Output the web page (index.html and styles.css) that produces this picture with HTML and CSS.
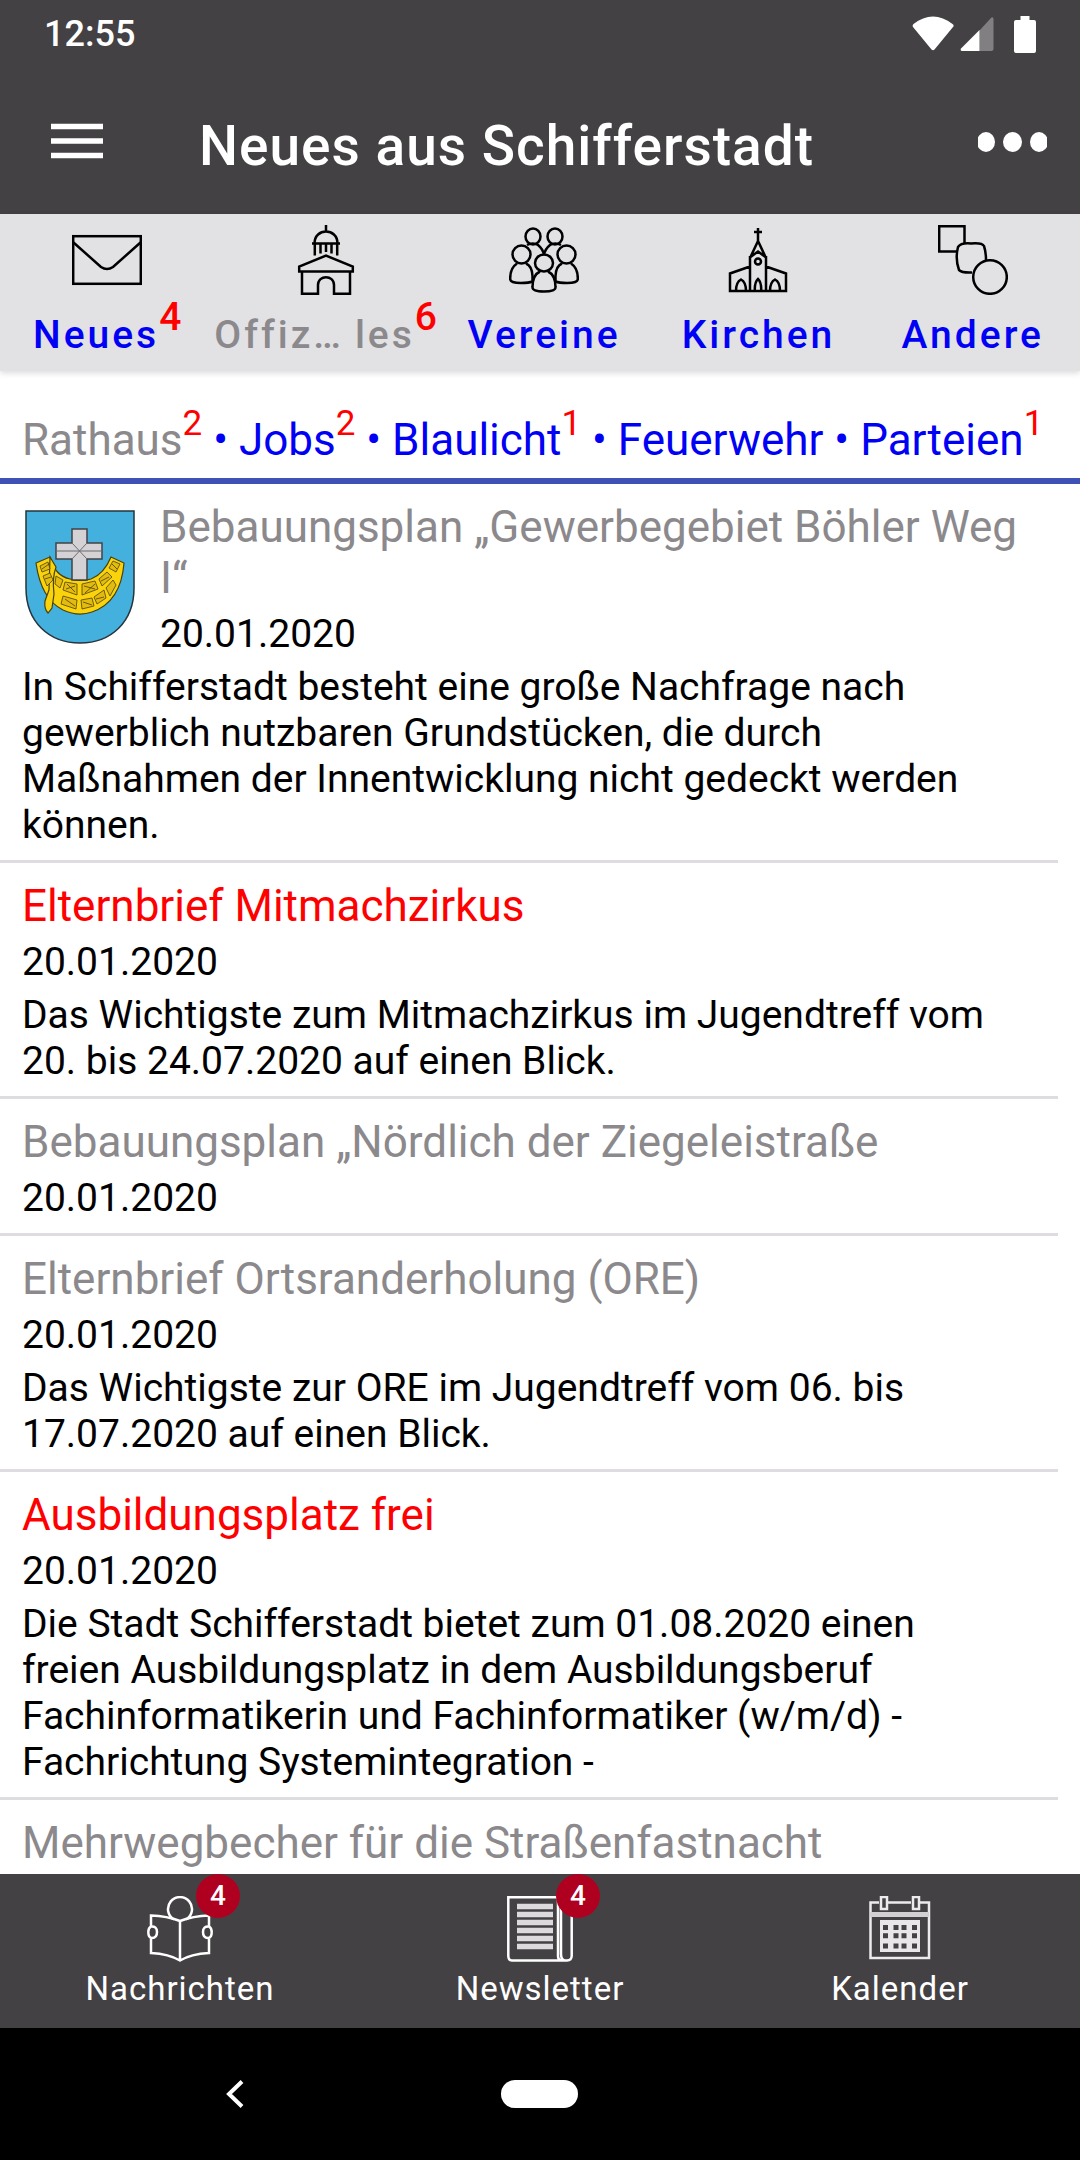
FILE: index.html
```
<!DOCTYPE html>
<html lang="de">
<head>
  <meta charset="UTF-8">
  <meta name="viewport" content="width=device-width, initial-scale=1.0">
  <title>Neues aus Schifferstadt</title>
  <link rel="stylesheet" href="styles.css">
</head>
<body>

<div class="status-bar">
  <span class="clock">12:55</span>
  <div class="status-icons">
    <svg class="wifi" width="42" height="36" viewBox="0 0 42 36"><path d="M1.5 8Q0 9.500 1 11L19.500 33.500Q21 35 22.500 33.500L41 11Q42.500 9.500 40.500 8C28-2 14-2 1.500 8Z" fill="#fff"/></svg>
    <svg class="signal" width="34" height="36" viewBox="0 0 34 36"><path d="M19.500 14.500L30.500 2.500Q33 0 33.500 3V33Q33.500 35 31.500 35H19.500Z" fill="#827f82"/><path d="M19.500 14L1 32.500Q0 35 2 35H19.500Z" fill="#fff"/></svg>
    <svg class="battery" width="22" height="37" viewBox="0 0 22 37"><path d="M6.500 0H15.500V4H20Q22 4 22 6V35Q22 37 20 37H2Q0 37 0 35V6Q0 4 2 4H6.500Z" fill="#fff"/></svg>
  </div>
</div>

<header class="header">
  <button class="menu-btn" type="button" aria-label="Menü">
    <svg width="52" height="36" viewBox="0 0 52 36"><path d="M0 3.500H52M0 18H52M0 32.500H52" stroke="#fff" stroke-width="5.500"/></svg>
  </button>
  <h1>Neues aus Schifferstadt</h1>
  <button class="more-btn" type="button" aria-label="Mehr">
    <svg width="69" height="22" viewBox="0 0 69 22" fill="#fff"><ellipse cx="8" cy="12" rx="9" ry="10"/><ellipse cx="34.500" cy="12" rx="9.500" ry="10"/><ellipse cx="61" cy="12" rx="9" ry="10"/></svg>
  </button>
</header>

<nav class="tabs">
  <a class="tab" href="#">
    <svg class="tab-icon" viewBox="0 0 70 70"><rect x="1.200" y="11.200" width="67.600" height="47.600"/><path d="M1.500 17.500L29 42Q35 46 41 42L68.500 17.500"/></svg>
    <span class="tab-label">Neues<sup>4</sup></span>
  </a>
  <a class="tab active" href="#">
    <svg class="tab-icon" viewBox="0 0 70 70"><path d="M35 0V7M23.500 18.500C23.500 2.500 46.500 2.500 46.500 18.500M21 18.500H49M23.800 19V30.500M46.200 19V30.500M29.500 19V28.500M35 19V27M40.500 19V28.500M8.200 46.500V41.500L35 30.500L61.800 41.500V46.500ZM11 47V68.800H27V60C27 49.500 43 49.500 43 60V68.800H59V47"/></svg>
    <span class="tab-label">Offiz…&thinsp;les<sup>6</sup></span>
  </a>
  <a class="tab" href="#">
    <svg class="tab-icon" viewBox="0 0 70 70"><ellipse cx="24" cy="11.500" rx="7.500" ry="8"/><ellipse cx="46" cy="11.500" rx="7.500" ry="8"/><ellipse cx="12.500" cy="29.500" rx="9" ry="9"/><ellipse cx="57.500" cy="29.500" rx="9" ry="9"/><ellipse cx="35" cy="38" rx="9" ry="8.500"/><path d="M18 20Q24 17 29 20Q34 24 35 30Q36 24 41 20Q46 17 52 20"/><path d="M8 38.500Q1 43 1.200 54Q1 58 12 58Q20 58 23.500 56.500V51Q23 41 17 38.500M62 38.500Q69 43 68.800 54Q69 58 58 58Q50 58 46.500 56.500V51Q47 41 53 38.500"/><path d="M31 46.500Q23.500 50 23.500 62Q23 66.500 35 66.500Q47 66.500 46.500 62Q46.500 50 39 46.500"/></svg>
    <span class="tab-label">Vereine</span>
  </a>
  <a class="tab" href="#">
    <svg class="tab-icon" viewBox="0 0 70 70"><path d="M35 3V16M31 7H39M35 16L27.500 32L35 26.500L42.500 32ZM27 31V66H43V31M27 41.500L7 48.500V66H63V48.500L43 41.500M13 66Q13 57 18 54.500Q23 57 23 66M31.800 66Q31.500 57 35 54Q38.500 57 38.200 66M47 66Q47 57 52 54.500Q57 57 57 66"/><circle cx="35" cy="36.500" r="3"/></svg>
    <span class="tab-label">Kirchen</span>
  </a>
  <a class="tab" href="#">
    <svg class="tab-icon" viewBox="0 0 70 70"><path d="M18 26.500H1.200V1.200H26.500V18"/><path d="M34 47.500Q24 48 21 45Q17 34 20 22Q23 17.500 33 18.500Q44 17.500 46 21Q48 27 48 35"/><circle cx="52" cy="52" r="16.800"/></svg>
    <span class="tab-label">Andere</span>
  </a>
</nav>

<nav class="subnav">
  <a class="active" href="#">Rathaus<sup>2</sup></a> • <a href="#">Jobs<sup>2</sup></a> • <a href="#">Blaulicht<sup>1</sup></a> • <a href="#">Feuerwehr</a> • <a href="#">Parteien<sup>1</sup></a>
</nav>

<main class="news">
  <article class="item">
    <div class="item-head">
      <svg class="crest" width="110" height="134" viewBox="0 0 110 134">
        <path d="M1 1H109V78C109 112 86 133 55 133S1 112 1 78Z" fill="#44b0de" stroke="#26343c" stroke-width="1.500"/>
        <g fill="#fbd30c" stroke="#4b4209" stroke-width="1.200">
          <path d="M11 53L25 47Q30 66 45 69Q55 72 66 69Q79 64 86 47L99 53Q96 92 67 102Q53 107 38 100Q16 89 11 53Z"/>
          <path d="M25 47L31 57Q27 68 29 84L27 98L23 103Q19 99 20 91L24 80Z"/>
          <path d="M15 56L23 52L25 59L17 62ZM18 66L25 63L28 70L22 76ZM31 66L38 70L35 78L30 74ZM40 72L52 74V85L38 80ZM57 74L70 71L73 79L57 85ZM74 69L82 62L87 67L77 76ZM84 58L88 51L95 54L91 62ZM81 78L88 70L91 75L85 86ZM69 87L79 80L81 88L72 94ZM56 90L67 88L69 96L57 99ZM52 90L38 86L36 94L51 99Z" fill="#e3ba10" stroke-width=".8"/>
          <path d="M42 74L50 82M41 79L50 76M59 76L70 79M60 83L70 74M76 71L84 67M58 92L67 95M71 89L79 87M40 89L50 96M17 59L24 54M87 54L92 59M20 69L26 67" fill="none" stroke-width=".8"/>
        </g>
        <path d="M47 19H62V33H77V49H62V70H47V49H31V33H47Z" fill="#d4d2d5" stroke="#414145" stroke-width="1.500"/>
        <path d="M31 41H77M47 33L62 49M62 33L47 49" stroke="#6b6b70" fill="none"/>
      </svg>
      <div>
        <h2 class="read"><a href="#">Bebauungsplan „Gewerbegebiet Böhler Weg I“</a></h2>
        <time datetime="2020-01-20">20.01.2020</time>
      </div>
    </div>
    <p>In Schifferstadt besteht eine große Nachfrage nach gewerblich nutzbaren Grundstücken, die durch Maßnahmen der Innentwicklung nicht gedeckt werden können.</p>
  </article>
  <article class="item">
    <h2><a href="#">Elternbrief Mitmachzirkus</a></h2>
    <time datetime="2020-01-20">20.01.2020</time>
    <p>Das Wichtigste zum Mitmachzirkus im Jugendtreff vom 20. bis 24.07.2020 auf einen Blick.</p>
  </article>
  <article class="item">
    <h2 class="read"><a href="#">Bebauungsplan „Nördlich der Ziegeleistraße</a></h2>
    <time datetime="2020-01-20">20.01.2020</time>
  </article>
  <article class="item">
    <h2 class="read"><a href="#">Elternbrief Ortsranderholung (ORE)</a></h2>
    <time datetime="2020-01-20">20.01.2020</time>
    <p>Das Wichtigste zur ORE im Jugendtreff vom 06. bis 17.07.2020 auf einen Blick.</p>
  </article>
  <article class="item">
    <h2><a href="#">Ausbildungsplatz frei</a></h2>
    <time datetime="2020-01-20">20.01.2020</time>
    <p>Die Stadt Schifferstadt bietet zum 01.08.2020 einen freien Ausbildungsplatz in dem Ausbildungsberuf Fachinformatikerin und Fachinformatiker (w/m/d) - Fachrichtung Systemintegration -</p>
  </article>
  <article class="item">
    <h2 class="read"><a href="#">Mehrwegbecher für die Straßenfastnacht</a></h2>
  </article>
</main>

<nav class="bottom-nav">
  <a href="#">
    <span class="nav-icon">
      <svg width="66" height="66" viewBox="0 0 66 66"><g fill="none" stroke="#fff" stroke-width="2.500"><path d="M27 23.500A12 12 0 1 1 39 23.500"/><path d="M33 25Q20 20 4 19.500V30M4 43V57Q22 58 33 64.500Q44 58 62 57V43M62 30V19.500Q46 20 33 25V64"/><path d="M4 30.500Q10 30 10 36Q10 42 5 42Q1.300 42 1.300 36Q1.300 32 4 30.500ZM62 30.500Q56 30 56 36Q56 42 61 42Q64.700 42 64.700 36Q64.700 32 62 30.500Z"/></g></svg>
      <span class="badge">4</span>
    </span>
    Nachrichten
  </a>
  <a href="#">
    <span class="nav-icon">
      <svg width="66" height="66" viewBox="0 0 66 66"><g fill="none" stroke="#fff" stroke-width="2.500"><path d="M51 60V1.300H1.300V60Q1.500 64.500 5 64.500H60Q64.500 64.500 64.700 60V10H54V58Q54 64 58 64.500M51 60Q51 64 54 64.500"/></g><path d="M10 10.500H46M10 18.500H46M10 26.500H46M10 34.500H46M10 42.500H46M10 50.500H46" stroke="#dcdadd" stroke-width="5.500"/></svg>
      <span class="badge">4</span>
    </span>
    Newsletter
  </a>
  <a href="#">
    <span class="nav-icon">
      <svg width="66" height="66" viewBox="0 0 66 66"><path d="M12 6.500H3.500V62H62V6.500H53M21 6.500H44M14 1H20V13H14ZM46 1H52V13H46Z" fill="none" stroke="#eceaed" stroke-width="2.500"/><path d="M3 18.500H62" stroke="#d2d0d3" stroke-width="5"/><path d="M13 24H53V56H13Z" fill="#e8e6e9"/><path d="M16 31.500H21M26.500 31.500H31.500M34.500 31.500H39.500M45 31.500H50M16 39.800H21M26.500 39.800H31.500M34.500 39.800H39.500M45 39.800H50M16 50H21M26.500 50H31.500M34.500 50H39.500M45 50H50" stroke="#444144" stroke-width="5"/></svg>
    </span>
    Kalender
  </a>
</nav>

<div class="system-bar">
  <button type="button" aria-label="Zurück"><svg width="18" height="28" viewBox="0 0 18 28"><path d="M16 1.500L3 14L16 26.500" fill="none" stroke="#fff" stroke-width="4"/></svg></button>
  <button type="button" aria-label="Startseite"><span class="pill"></span></button>
</div>

</body>
</html>
```
FILE: styles.css
```
* {
  box-sizing: border-box;
}

body {
  margin: 0;
  height: 100vh;
  display: flex;
  flex-direction: column;
  font-family: Roboto, sans-serif;
  font-size: 39px;
  line-height: 46px;
  color: #000;
  background: #fff;
}

a {
  color: inherit;
  text-decoration: none;
}

button {
  padding: 0;
  border: none;
  background: none;
  cursor: pointer;
}

svg {
  display: block;
}

/* top */
.status-bar {
  display: flex;
  justify-content: space-between;
  align-items: center;
  height: 68px;
  padding: 0 44px;
  background: #444144;
  color: #fff;
}

.clock {
  font-size: 36px;
  font-weight: 500;
}

.status-icons {
  display: flex;
  align-items: center;
  gap: 6px;
}

.battery {
  margin-left: 14px;
}

.header {
  display: flex;
  align-items: center;
  height: 146px;
  padding: 0 33px 0 51px;
  background: #444144;
  color: #fff;
}

.header h1 {
  flex: 1;
  margin: 0 0 0 96px;
  padding-top: 9px;
  font-size: 55px;
  font-weight: 500;
  line-height: 64px;
  letter-spacing: 1px;
}

/* category tabs */
.tabs {
  display: flex;
  background: #e2e1e4;
  box-shadow: 0 2px 6px rgba(0, 0, 0, 0.15);
}

.tab {
  flex: 1 1 0;
  display: flex;
  flex-direction: column;
  align-items: center;
  padding: 11px 0 13px;
  color: #0000f5;
  white-space: nowrap;
}

.tab.active,
.subnav .active {
  color: #8b898c;
}

.tab-icon {
  width: 70px;
  height: 70px;
  margin-bottom: 17px;
  fill: none;
  stroke: #000;
  stroke-width: 2.5;
}

.tab-label {
  font-weight: 500;
  letter-spacing: 3px;
}

sup {
  position: relative;
  top: -18px;
  vertical-align: baseline;
  font-size: 39px;
  line-height: 0;
  letter-spacing: 0;
  color: #f00;
}

/* sections */
.subnav {
  padding: 49px 22px 18px;
  border-bottom: 6px solid #3f51b5;
  font-size: 44px;
  line-height: 40px;
  white-space: nowrap;
  color: #0000f5;
}

.subnav sup {
  top: -20px;
  font-size: 35px;
}

/* news list */
.news {
  flex: 1;
  min-height: 0;
  overflow: hidden;
  padding-right: 22px;
}

.item {
  padding: 18px 40px 12px 22px;
  border-bottom: 3px solid #dedce0;
}

.item-head {
  display: flex;
}

.crest {
  flex: none;
  margin: 8px 25px 0 3px;
}

.item h2 {
  margin: 0 0 7px;
  font-size: 44px;
  font-weight: 400;
  line-height: 51px;
  color: #f00;
}

.item h2.read {
  color: #8b898c;
}

.item time {
  display: block;
}

.item p {
  margin: 7px 0 0;
}

/* bottom */
.bottom-nav {
  display: flex;
  height: 154px;
  background: #444144;
  color: #fff;
  font-size: 33px;
  line-height: 40px;
  letter-spacing: 1px;
}

.bottom-nav a {
  flex: 1;
  display: flex;
  flex-direction: column;
  align-items: center;
  padding-top: 22px;
}

.nav-icon {
  position: relative;
  margin-bottom: 7px;
}

.badge {
  position: absolute;
  top: -22px;
  left: 49px;
  width: 44px;
  height: 44px;
  border-radius: 50%;
  background: #b00020;
  font-size: 28px;
  font-weight: 500;
  line-height: 44px;
  letter-spacing: 0;
  text-align: center;
}

.system-bar {
  display: grid;
  grid-template-columns: repeat(3, 1fr);
  place-items: center;
  height: 132px;
  padding: 0 82px;
  background: #000;
}

.pill {
  display: block;
  width: 77px;
  height: 28px;
  border-radius: 14px;
  background: #fff;
}
```
